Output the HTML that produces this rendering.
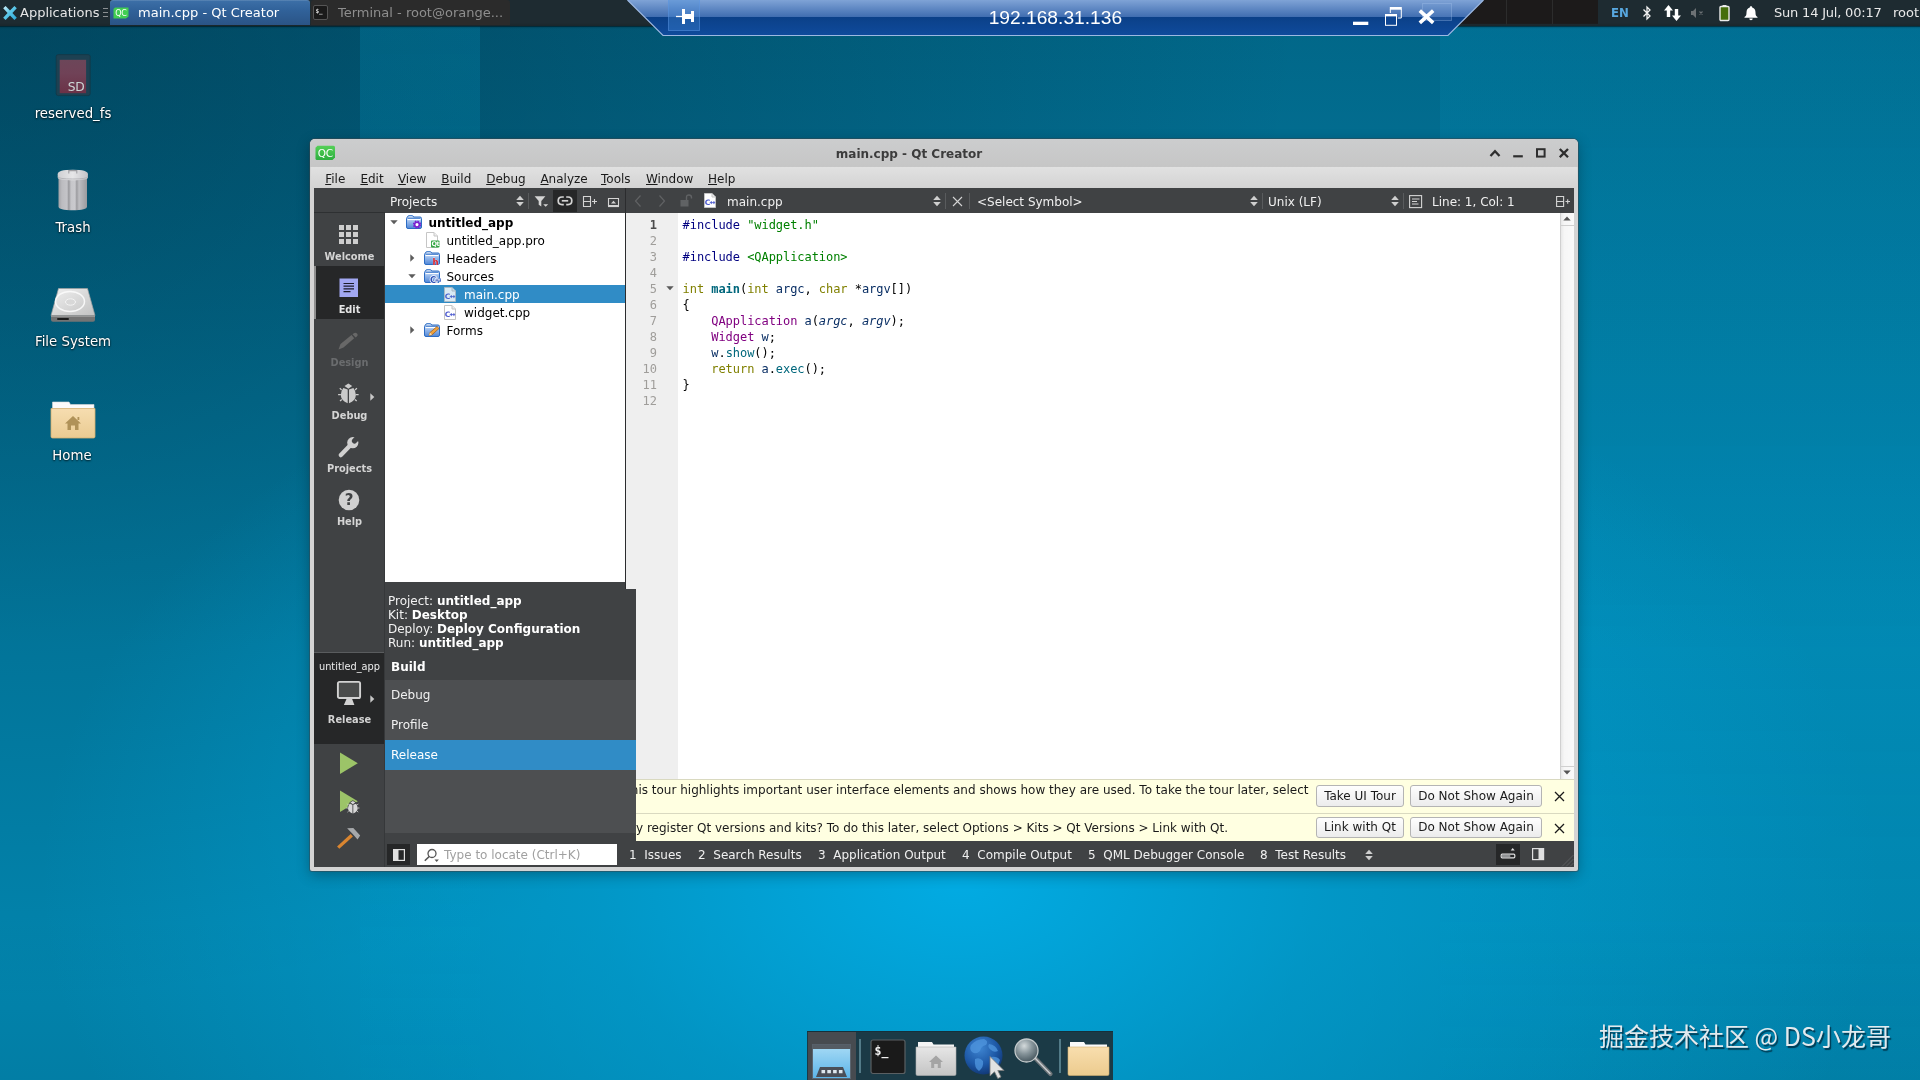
<!DOCTYPE html>
<html lang="en">
<head>
<meta charset="utf-8">
<title>main.cpp - Qt Creator</title>
<style>
*{box-sizing:border-box;margin:0;padding:0}
html,body{width:1920px;height:1080px;overflow:hidden}
body{position:relative;font-family:"DejaVu Sans","Liberation Sans",sans-serif;font-size:12px;color:#000;
background:
 radial-gradient(ellipse 920px 600px at 960px 880px, rgba(2,174,231,.92) 0%, rgba(2,165,218,.55) 40%, rgba(2,150,200,0) 100%),
 radial-gradient(ellipse 1300px 1000px at 0px 0px, rgba(0,25,38,.42) 0%, rgba(0,25,38,.26) 40%, rgba(0,25,38,0) 100%),
 linear-gradient(180deg, rgba(0,30,45,.30) 0%, rgba(0,30,45,0) 60%),
 linear-gradient(0deg, rgba(0,30,45,.07) 0%, rgba(0,30,45,0) 15%),
 #0285ae;
}
.abs{position:absolute}
body>*{will-change:transform}
.stripe{position:absolute;top:0;height:1080px}
/* ---------- top panel ---------- */
#panel{position:absolute;left:0;top:0;width:1920px;height:26px;background:#1e2b31;box-shadow:0 1px 0 rgba(0,20,28,.55),0 2px 1px rgba(0,20,28,.15);color:#e6e6e6;font-size:13px}
#panel .t{position:absolute;top:0;line-height:25px;white-space:pre}
/* ---------- desktop icons ---------- */
.dlabel{position:absolute;width:144px;left:0;text-align:center;color:#fff;font-size:13.3px;line-height:16px;text-shadow:0 1px 2px rgba(0,0,0,.75),0 0 2px rgba(0,0,0,.5)}
/* ---------- window ---------- */
#win{position:absolute;left:310px;top:139px;width:1268px;height:732px;background:#d4d4d4;border-radius:5px 5px 2px 2px;box-shadow:0 0 0 1px rgba(60,70,75,.5),0 4px 14px rgba(0,0,0,.3)}
#title{position:absolute;left:0;top:0;width:1268px;height:28px;border-radius:5px 5px 0 0;background:linear-gradient(#cccdce,#c6c6c6)}
#title .tt{position:absolute;left:-1px;width:1200px;text-align:center;top:.5px;line-height:28px;font-weight:bold;font-size:12px;color:#3c3c3c}
#menubar{position:absolute;left:1px;top:28px;width:1266px;height:21px;background:linear-gradient(#e1e1e1,#d3d3d3)}
#menubar span{position:absolute;top:1px;line-height:22px;font-size:12px;color:#1a1a1a;white-space:pre}
#menubar u{text-decoration:underline;text-underline-offset:1px}
#qc{position:absolute;left:4px;top:49px;width:1260px;height:679px;background:#fff;overflow:hidden}

/* ---------- Qt Creator ---------- */
#scr{position:absolute;left:-314px;top:-188px;width:1920px;height:1080px}
#scr div,#scr span,#scr svg{position:absolute}
.dk{background:#404244}
.tb{color:#f0f0f0;font-size:12px;line-height:24px;top:190px;white-space:pre}
.sep{top:193px;width:1px;height:16px;background:#595b5d}
.ml{left:314px;width:71px;text-align:center;font-weight:bold;font-size:9.800px;line-height:12px;margin-top:1px;color:#d4d4d4}
.tr{left:385px;width:240px;height:18px;font-size:12px;line-height:18px;white-space:pre}
.tr span{top:1px}
.ln{left:626px;width:31px;text-align:right;font:12px/16px "DejaVu Sans Mono","Liberation Mono",monospace;color:#9f9d9a;height:16px}
.cl{left:682.600px;height:16px;font:12px/16px "DejaVu Sans Mono","Liberation Mono",monospace;letter-spacing:-.055px;white-space:pre;color:#000}
.cl i,.cl b,.cl s,.cl u,.cl em,.cl q,.cl var{font-style:normal;font-weight:normal;text-decoration:none;quotes:none}
.cl i{color:#000080}.cl s{color:#008000}.cl u{color:#808000}.cl b{color:#00677c;font-weight:bold}.cl em{color:#800080}.cl var{color:#092e64}.cl var.it{font-style:italic}.cl q{color:#00677c}
.kl{left:388px;font-size:12px;line-height:14px;color:#f2f2f2;white-space:pre}
.kl b{color:#fff}
.li{left:385px;width:251px;height:30px;font-size:12px;line-height:31px;color:#f0f0f0;padding-left:6px}
.ib{left:626px;width:948px;background:#ffffe1;overflow:hidden;font-size:12px;color:#1a1a1a}
.ib .tx{white-space:pre;text-align:right;line-height:16px}
.btn{height:22px;border:1px solid #b4b4b4;border-radius:3px;background:linear-gradient(#fefefe,#ececec);font-size:12px;line-height:20px;text-align:center;color:#1a1a1a;white-space:pre}
.sb{top:843px;line-height:25px;font-size:12px;color:#f0f0f0;white-space:pre}
</style>
</head>
<body>
<!-- wallpaper stripes -->
<div class="stripe" style="left:360px;width:120px;background:linear-gradient(rgba(2,170,220,.20),rgba(2,170,220,.14) 50%,rgba(2,170,220,.05))"></div>
<div class="stripe" style="left:1440px;width:480px;background:linear-gradient(rgba(2,170,225,.13),rgba(2,170,225,.12) 55%,rgba(2,170,225,.03))"></div>

<!-- PANEL -->
<div id="panel">
 <div class="abs" style="left:1440px;top:0;width:158px;height:24px;background:#1c1a1a"></div>
 <div class="abs" style="left:1506px;top:0;width:1px;height:26px;background:#2c2c2c"></div>
 <div class="abs" style="left:1552px;top:0;width:1px;height:24px;background:#2c2c2c"></div>
 <div class="abs" style="left:0;top:23px;width:1920px;height:3px;background:linear-gradient(rgba(30,43,49,0),#1a262b)"></div>
 <!-- xfce logo -->
 <svg class="abs" style="left:2px;top:5px" width="16" height="16" viewBox="0 0 16 16"><defs><linearGradient id="xg" x1="0" y1="0" x2="1" y2="1"><stop offset="0" stop-color="#d8f2fb"/><stop offset=".45" stop-color="#5cc8ea"/><stop offset="1" stop-color="#2aa6d6"/></linearGradient></defs><path d="M1.2 3.2 3.6 .9 8 5.4 12.4 .9 14.8 3.2 10.4 7.9 14.8 12.7 12.4 15 8 10.4 3.6 15 1.2 12.7 5.6 7.9Z" fill="url(#xg)"/></svg>
 <span class="t" style="left:20px">Applications</span>
 <div class="abs" style="left:103px;top:8px;width:5px;height:1px;background:#8a8f92;box-shadow:0 4px 0 #8a8f92,0 8px 0 #8a8f92"></div>
 <!-- active task -->
 <div class="abs" style="left:110px;top:0;width:200px;height:25px;border-radius:3px 3px 0 0;background:linear-gradient(#3d70a8,#31629a 40%,#2a5486);box-shadow:inset 0 1px 0 rgba(255,255,255,.12)"></div>
 <svg class="abs" style="left:113px;top:7px" width="16" height="12" viewBox="0 0 16 12"><path d="M2 .5h13.5v9L13 11.5H.5V2Z" fill="#41cd52"/><text x="8" y="9.200" font-family="DejaVu Sans,sans-serif" font-size="8" fill="#fff" text-anchor="middle" letter-spacing="-.3">QC</text></svg>
 <span class="t" style="left:138px;color:#fff">main.cpp - Qt Creator</span>
 <!-- terminal task -->
 <div class="abs" style="left:311px;top:0;width:199px;height:25px;border-radius:3px 3px 0 0;background:#2b2b2b"></div>
 <svg class="abs" style="left:313px;top:5px" width="16" height="16" viewBox="0 0 16 16"><rect x=".5" y=".5" width="14" height="14" rx="1.5" fill="#1a1a1a" stroke="#555"/><text x="2.5" y="8" font-family="DejaVu Sans Mono,monospace" font-weight="bold" font-size="6" fill="#ddd">$_</text></svg>
 <span class="t" style="left:338px;color:#8e8e8e">Terminal - root@orange...</span>
 <!-- tray -->
 <span class="t" style="left:1611px;color:#58a8e0;font-weight:bold;font-size:13px;font-family:'DejaVu Sans Condensed','DejaVu Sans',sans-serif">EN</span>
 <svg class="abs" style="left:1641px;top:5px" width="12" height="16" viewBox="0 0 12 16"><path d="M2.5 4.5 9 11 6 14V2l3 3-6.5 6.5" fill="none" stroke="#f2f2f2" stroke-width="1.3"/></svg>
 <svg class="abs" style="left:1663px;top:4px" width="20" height="18" viewBox="0 0 20 18"><path d="M5.500 1 10 6.500H7.200V13H3.800V6.500H1Z" fill="#fff"/><path d="M13.500 17 18 11.500H15.200V5H11.800V11.500H9Z" fill="#fff"/></svg>
 <svg class="abs" style="left:1690px;top:7px" width="16" height="12" viewBox="0 0 16 12"><path d="M1 4h2l3-3v10L3 8H1Z" fill="#6c7174"/><path d="M9.500 4.500l3 3m0-3l-3 3" stroke="#6c7174" stroke-width="1.1"/></svg>
 <svg class="abs" style="left:1718px;top:4px" width="14" height="18" viewBox="0 0 14 18"><rect x="4.500" y="1" width="4" height="2" fill="#e8e8e8"/><rect x="2" y="2.500" width="9" height="14" rx="1" fill="#456e0c" stroke="#ececec" stroke-width="1.4"/></svg>
 <svg class="abs" style="left:1743px;top:5px" width="16" height="16" viewBox="0 0 16 16"><path d="M8 1.200c.8 0 1.200.5 1.200 1.200 2.300.7 3.300 2.600 3.300 5 0 2.600.5 3.600 2 4.600v.8H1.500V12c1.500-1 2-2 2-4.600 0-2.400 1-4.300 3.300-5 0-.7.400-1.200 1.200-1.200ZM6.300 13.600h3.400c0 1-.7 1.700-1.700 1.700s-1.700-.7-1.700-1.700Z" fill="#fff"/></svg>
 <span class="t" style="left:1774px;color:#e9e9e9;letter-spacing:-.2px">Sun 14 Jul, 00:17</span>
 <span class="t" style="left:1893px;color:#e9e9e9">root</span>
</div>

<!-- RDP connection bar -->
<svg class="abs" style="left:620px;top:0" width="880" height="40" viewBox="0 0 880 40">
 <defs>
  <linearGradient id="rg1" x1="0" y1="0" x2="0" y2="1"><stop offset="0" stop-color="#7fa3d6"/><stop offset=".47" stop-color="#416eb1"/><stop offset=".48" stop-color="#0b4088"/><stop offset="1" stop-color="#0f4b9c"/></linearGradient>
 </defs>
 <path d="M7.500 0H863.500L828 35.500H43Z" fill="url(#rg1)"/>
 <path d="M7.500 0 43 35.500H828L863.500 0" fill="none" stroke="#9db9e2" stroke-width="1.200"/>
 <rect x="48.500" y="-1" width="31" height="31.500" fill="rgba(70,140,220,.35)" stroke="rgba(90,150,225,.55)"/>
 <path d="M56 16.500h6" stroke="#fff" stroke-width="1.300"/><path d="M62 9h3v15h-3zM65 14h6v5h-6zM71 11h3v11h-3z" fill="#fff"/>
 <text x="368.700" y="23.900" font-family="Liberation Sans,sans-serif" font-size="19.200" fill="#fff">192.168.31.136</text>
 <rect x="733" y="21.700" width="15.300" height="3.300" fill="#fff"/>
 <path d="M770.300 13v-4h11v9h-3.500" fill="none" stroke="#fff" stroke-width="1"/><path d="M769.800 8.200h12" stroke="#fff" stroke-width="2.400"/>
 <rect x="765.500" y="15" width="11" height="10.300" fill="#0d4592" stroke="#fff" stroke-width="1"/><path d="M765 15.200h12" stroke="#fff" stroke-width="2.400"/>
 <rect x="802.500" y="3.500" width="29" height="17" fill="rgba(120,160,220,.16)" stroke="rgba(170,200,240,.32)"/>
 <path d="M799.800 10.600 813.200 22.800M813.200 10.600 799.800 22.800" stroke="#fff" stroke-width="3.600"/>
</svg>


<!-- DESKTOP ICONS -->
<div id="desk" class="abs" style="left:0;top:0;width:160px;height:480px">
 <svg class="abs" style="left:55px;top:53px" width="38" height="44" viewBox="0 0 38 44"><defs><linearGradient id="sdg" x1="0" y1="0" x2="0" y2="1"><stop offset="0" stop-color="#6c4659"/><stop offset=".4" stop-color="#704257"/><stop offset="1" stop-color="#6b3247"/></linearGradient></defs><rect x="1.200" y="1.600" width="34" height="41" rx="2" fill="#1d4152"/><rect x="1.200" y="1.600" width="34" height="41" rx="2" fill="none" stroke="#16323f" stroke-width=".8" opacity=".7"/><rect x="4.700" y="6.800" width="26.400" height="33.400" fill="url(#sdg)"/><text x="29.300" y="38.200" text-anchor="end" font-family="DejaVu Sans,sans-serif" font-size="12.300" fill="#cdd6d6" letter-spacing="-.4">SD</text></svg>
 <div class="dlabel" style="left:1px;top:106px">reserved_fs</div>

 <svg class="abs" style="left:56px;top:168px" width="34" height="44" viewBox="0 0 34 44"><defs><linearGradient id="tg" x1="0" y1="0" x2="1" y2="0"><stop offset="0" stop-color="#a2a2a6"/><stop offset=".12" stop-color="#bcbcc0"/><stop offset=".3" stop-color="#c4c4c8"/><stop offset=".36" stop-color="#98989c"/><stop offset=".44" stop-color="#c6c6ca"/><stop offset=".58" stop-color="#cacace"/><stop offset=".64" stop-color="#9c9ca0"/><stop offset=".72" stop-color="#bebec2"/><stop offset="1" stop-color="#9a9a9e"/></linearGradient><linearGradient id="tl" x1="0" y1="0" x2="1" y2="0"><stop offset="0" stop-color="#cfcfd2"/><stop offset=".5" stop-color="#e6e6e8"/><stop offset="1" stop-color="#c4c4c8"/></linearGradient></defs><path d="M2.500 9V38.500Q2.500 42.300 16.800 42.300Q31 42.300 31 38.500V9Z" fill="url(#tg)"/><path d="M1.700 6.200Q1.700 1.800 16.800 1.800Q31.900 1.800 31.900 6.200V9.500Q31.900 12.200 16.800 12.200Q1.700 12.200 1.700 9.500Z" fill="url(#tl)"/><path d="M1.900 8.800Q2.500 11 16.800 11Q31 11 31.700 8.800" fill="none" stroke="#a8a8ac" stroke-width=".7"/><path d="M12.800 5.400V2.600H20.800V5.400" fill="none" stroke="#a0a0a4" stroke-width="1.100"/></svg>
 <div class="dlabel" style="left:1px;top:220px">Trash</div>

 <svg class="abs" style="left:49px;top:287px" width="48" height="37" viewBox="0 0 48 37"><defs><linearGradient id="hg" x1="0" y1="0" x2="1" y2="1"><stop offset="0" stop-color="#f0f0f0"/><stop offset="1" stop-color="#c2c2c2"/></linearGradient></defs><path d="M9.500 1.500H38.500L46 28.500H2Z" fill="url(#hg)" stroke="#a0a0a0" stroke-width=".7"/><ellipse cx="21" cy="14.500" rx="14.500" ry="10" fill="none" stroke="#fbfbfb" stroke-width="1.500" opacity=".9"/><ellipse cx="21.500" cy="15" rx="5" ry="3.200" fill="#d8d8d8" stroke="#f4f4f4"/><path d="M2 28.500H46V32.800Q46 34.800 44 34.800H4Q2 34.800 2 32.800Z" fill="#747474"/><path d="M2 28.500H46V29.800H2Z" fill="#a2a2a2"/><rect x="8" y="31" width="12" height="2" rx="1" fill="#1c1c1c"/></svg>
 <div class="dlabel" style="left:1px;top:334px">File System</div>

 <svg class="abs" style="left:49px;top:400px" width="48" height="40" viewBox="0 0 48 40"><defs><linearGradient id="hf" x1="0" y1="0" x2="0" y2="1"><stop offset="0" stop-color="#f6ddb0"/><stop offset="1" stop-color="#eacb92"/></linearGradient></defs><path d="M3.500 2H20L21.500 4.500H45V12H3.500Z" fill="#fbfbfb" stroke="#d8d8d8" stroke-width=".6"/><path d="M2 8.500H46V36.500Q46 38 44.500 38H3.500Q2 38 2 36.500Z" fill="url(#hf)" stroke="#d4b070" stroke-width=".8"/><path d="M24 16 32 23.500H29.500V30H26V25.500H22V30H18.500V23.500H16Z" fill="#b09258"/><rect x="28.500" y="17" width="1.800" height="3" fill="#b09258"/></svg>
 <div class="dlabel" style="left:0;top:448px">Home</div>
</div>

<!-- DOCK -->
<div id="dock" class="abs" style="left:807px;top:1031px;width:306px;height:49px;background:#1b3a46;box-shadow:inset 0 1px 0 #16303a">
 <div class="abs" style="left:1px;top:1px;width:48px;height:48px;background:#474b50"></div>
 <svg class="abs" style="left:5px;top:13px" width="40" height="36" viewBox="0 0 40 36"><defs><linearGradient id="dg" x1="0" y1="0" x2="0" y2="1"><stop offset="0" stop-color="#a9dcf6"/><stop offset="1" stop-color="#5cb4e8"/></linearGradient></defs><rect x=".5" y=".5" width="38" height="34" fill="url(#dg)" stroke="#5a6570"/><rect x=".5" y=".5" width="38" height="4.500" fill="#555c64"/><path d="M8 23H31L35 33H4Z" fill="#4a4f58"/><path d="M9.500 26h3.600v3.200H9.500zM15.300 26h3.600v3.200h-3.600zM21.100 26h3.600v3.200h-3.600zM26.900 26h3.600v3.200h-3.600z" fill="#dfe8ee"/></svg>
 <div class="abs" style="left:52px;top:8px;width:2px;height:34px;background:#5d8794;opacity:.85"></div>
 <svg class="abs" style="left:63px;top:8px" width="36" height="36" viewBox="0 0 36 36"><rect x="1" y="1" width="34" height="33.500" rx="2" fill="#1a1a1a" stroke="#5a5f62" stroke-width="1.200"/><text x="4.500" y="16" font-family="DejaVu Sans Mono,monospace" font-weight="bold" font-size="11.500" fill="#f2f2f2">$_</text></svg>
 <svg class="abs" style="left:108px;top:10px" width="42" height="36" viewBox="0 0 42 36"><defs><linearGradient id="gf" x1="0" y1="0" x2="0" y2="1"><stop offset="0" stop-color="#e6e6e6"/><stop offset="1" stop-color="#c4c4c4"/></linearGradient></defs><path d="M3 1H17L18.500 3.500H39V10H3Z" fill="#f4f4f4"/><path d="M1 6H41V33Q41 34.500 39.500 34.500H2.500Q1 34.500 1 33Z" fill="url(#gf)" stroke="#b0b0b0" stroke-width=".6"/><path d="M21 14.500 28 21H25.800V27H22.800V23H19.200V27H16.200V21H14Z" fill="#a4a4a4"/></svg>
 <svg class="abs" style="left:156px;top:4px" width="46" height="44" viewBox="0 0 46 44"><defs><radialGradient id="gl" cx=".4" cy=".3" r=".75"><stop offset="0" stop-color="#3f86d2"/><stop offset=".6" stop-color="#1d58a6"/><stop offset="1" stop-color="#103470"/></radialGradient></defs><circle cx="20.500" cy="20.500" r="19" fill="url(#gl)"/><path d="M8 10Q13 4 21 4Q26 6 23 10Q18 11 17 16Q13 20 9 17Q6 14 8 10ZM26 9Q33 10 35 16Q31 18 28 15Q24 12 26 9ZM12 24Q17 22 20 26Q21 32 16 36Q11 33 12 24ZM28 22Q34 21 37 25Q35 32 30 35Q26 30 28 22Z" fill="#4d94dc" opacity=".8"/><path d="M27 21.500V41L31.500 36.800 34.800 43.500 38 42 34.800 35.500H41Z" fill="#e2e2e2" stroke="#7a7a7a" stroke-width=".8"/></svg>
 <svg class="abs" style="left:206px;top:6px" width="42" height="42" viewBox="0 0 42 42"><defs><radialGradient id="mg" cx=".4" cy=".3" r=".7"><stop offset="0" stop-color="#d4dadc"/><stop offset=".5" stop-color="#86949a"/><stop offset="1" stop-color="#4a5a62"/></radialGradient></defs><path d="M22 21 37.500 37" stroke="#6e7478" stroke-width="4.200" stroke-linecap="round"/><path d="M22 21 37 36.500" stroke="#c8cccf" stroke-width="1.400" stroke-linecap="round"/><circle cx="13.500" cy="13.500" r="11.500" fill="url(#mg)" stroke="#c4cacc" stroke-width="1.300"/></svg>
 <div class="abs" style="left:252px;top:8px;width:2px;height:34px;background:#5d8794;opacity:.85"></div>
 <svg class="abs" style="left:260px;top:10px" width="44" height="36" viewBox="0 0 44 36"><defs><linearGradient id="yf" x1="0" y1="0" x2="0" y2="1"><stop offset="0" stop-color="#f8deae"/><stop offset="1" stop-color="#eccb8e"/></linearGradient></defs><path d="M3 1H17L18.500 3.500H40V10H3Z" fill="#fafafa"/><path d="M1 6H42V33Q42 34.500 40.500 34.500H2.500Q1 34.500 1 33Z" fill="url(#yf)" stroke="#d4b070" stroke-width=".6"/></svg>
</div>

<!-- WATERMARK -->
<div class="abs" style="left:1599px;top:1017px;font-family:'Noto Sans CJK SC','Liberation Sans',sans-serif;font-size:25px;line-height:37px;color:#e2eaee;white-space:pre;text-shadow:1.500px 1.500px 1px rgba(0,40,60,.8)">掘金技术社区 @ DS小龙哥</div>

<!-- WINDOW -->
<div id="win">
 <div id="title"><div class="tt">main.cpp - Qt Creator</div>
 <svg class="abs" style="left:5px;top:6px" width="21" height="16" viewBox="0 0 21 16"><defs><linearGradient id="qg" x1="0" y1="0" x2="0" y2="1"><stop offset="0" stop-color="#55d058"/><stop offset="1" stop-color="#2cae3e"/></linearGradient></defs><path d="M2.500 .8H18.500Q20 .8 20 2.300V12.500L17.500 15H2Q.5 15 .5 13.500V2.800Z" fill="url(#qg)"/><text x="10.200" y="12" text-anchor="middle" font-family="DejaVu Sans,sans-serif" font-size="10.500" fill="#fff" letter-spacing="-.3">QC</text></svg>
 <svg class="abs" style="left:1179px;top:9px" width="12" height="10" viewBox="0 0 12 10"><path d="M1.500 8 6 3.200 10.500 8" fill="none" stroke="#2e2e2e" stroke-width="2.300"/></svg>
 <svg class="abs" style="left:1202px;top:9px" width="12" height="10" viewBox="0 0 12 10"><path d="M1.200 8.300H10.800" stroke="#2e2e2e" stroke-width="2.200"/></svg>
 <svg class="abs" style="left:1225px;top:9px" width="12" height="10" viewBox="0 0 12 10"><rect x="2" y="1.200" width="7.600" height="7.400" fill="none" stroke="#2e2e2e" stroke-width="2"/></svg>
 <svg class="abs" style="left:1248px;top:9px" width="12" height="10" viewBox="0 0 12 10"><path d="M1.800 1 10 9.200M10 1 1.800 9.200" stroke="#2e2e2e" stroke-width="2.300"/></svg>
</div>
 <div id="menubar"><span style="left:14.2px"><u>F</u>ile</span><span style="left:49.4px"><u>E</u>dit</span><span style="left:86.9px"><u>V</u>iew</span><span style="left:130.2px"><u>B</u>uild</span><span style="left:175.2px"><u>D</u>ebug</span><span style="left:229.4px"><u>A</u>nalyze</span><span style="left:290.0px"><u>T</u>ools</span><span style="left:335.0px"><u>W</u>indow</span><span style="left:397.0px"><u>H</u>elp</span></div>
 <div id="qc"><div id="scr">
<svg style="left:0;top:0" width="0" height="0"><defs>
<linearGradient id="fg" x1="0" y1="0" x2="0" y2="1"><stop offset="0" stop-color="#e8f0fc"/><stop offset=".35" stop-color="#a9c6f0"/><stop offset="1" stop-color="#4f86d6"/></linearGradient>
<g id="fold"><path d="M1.500 2.200Q1.500 .7 3 .7H6.200Q7.300 .7 7.600 2H14Q15.500 2 15.500 3.500V12Q15.500 13.500 14 13.500H2Q.5 13.500 .5 12V3.500Q.5 2.300 1.500 2.200Z" fill="url(#fg)" stroke="#2c6cc4" stroke-width="1"/><path d="M1.500 4.500H14.500" stroke="#fff" stroke-width="1.200"/><path d="M1.500 3.200H14.500" stroke="#2c6cc4" stroke-width="1"/></g>
<g id="cppf"><path d="M1.500 .5H9L12.500 4V14.500H1.500Z" fill="#fff" stroke="#c4c4c4"/><path d="M9 .5V4H12.500" fill="#eee" stroke="#c4c4c4"/><text x="1.800" y="12.300" font-family="DejaVu Sans,sans-serif" font-weight="bold" font-size="7.500" fill="#4d5bd0">C</text><path d="M6.800 9.600h3M8.300 8.100v3M9.600 9.600h2.600M10.900 8.100v3" stroke="#4d5bd0" stroke-width=".9"/></g>
</defs></svg>
<!-- toolbar -->
<div class="dk" style="left:314px;top:188px;width:1260px;height:25px"></div>
<div style="left:314px;top:212px;width:71px;height:1px;background:#2e3032"></div>
<div style="left:553px;top:190px;width:24px;height:22px;background:#262728"></div>
<div style="left:625px;top:188px;width:1px;height:679px;background:#2b2c2e"></div>
<span class="tb" style="left:390px">Projects</span>
<svg style="left:515.5px;top:195px" width="8" height="12" viewBox="0 0 8 12"><path d="M.2 5 4 .8 7.800 5ZM.2 7 4 11.200 7.800 7Z" fill="#cfcfcf"/></svg>
<div class="sep" style="left:528px"></div>
<svg style="left:534px;top:195px" width="16" height="13" viewBox="0 0 16 13"><path d="M.6 1.200H11.400L7.300 6V11.600L4.700 9.800V6Z" fill="#d4d4d4"/><path d="M9.200 9.200H14.200L11.700 11.800Z" fill="#d4d4d4"/></svg>
<svg style="left:557px;top:195px" width="16" height="12" viewBox="0 0 16 12"><path d="M6.800 2H5Q1.200 2 1.200 5.800Q1.200 9.600 5 9.600H6.800M9.200 2H11Q14.800 2 14.800 5.800Q14.800 9.600 11 9.600H9.200" fill="none" stroke="#d4d4d4" stroke-width="1.700"/><path d="M4.800 5.800H11.200" stroke="#d4d4d4" stroke-width="1.700"/></svg>
<svg style="left:582px;top:195px" width="16" height="13" viewBox="0 0 16 13"><path d="M1.500 1.500H8.500V11.500H1.500ZM1.500 6.500H8.500" fill="none" stroke="#d4d4d4" stroke-width="1.100"/><path d="M10 6.500H15M12.500 4V9" stroke="#d4d4d4" stroke-width="1.100"/></svg>
<svg style="left:607px;top:197px" width="13" height="11" viewBox="0 0 13 11"><path d="M1.500 1.500H11.500V8.500H1.500Z" fill="none" stroke="#d4d4d4" stroke-width="1.100"/><path d="M1 9.300H12" stroke="#d4d4d4" stroke-width="1.600"/><path d="M4 6.500 6.500 3.700 9 6.500Z" fill="#d4d4d4"/></svg>
<svg style="left:633px;top:194px" width="10" height="14" viewBox="0 0 10 14"><path d="M7.500 1.500 2.500 7 7.500 12.500" fill="none" stroke="#606264" stroke-width="1.200"/></svg>
<svg style="left:657px;top:194px" width="10" height="14" viewBox="0 0 10 14"><path d="M2.500 1.500 7.500 7 2.500 12.500" fill="none" stroke="#606264" stroke-width="1.200"/></svg>
<svg style="left:679px;top:193px" width="14" height="15" viewBox="0 0 14 15"><rect x="1.500" y="7" width="8" height="6.500" fill="#606264"/><path d="M7.500 7V4.500Q7.500 2 10 2Q12.500 2 12.500 4.500V5.500" fill="none" stroke="#606264" stroke-width="1.400"/></svg>
<svg style="left:703px;top:193px" width="14" height="16" viewBox="0 0 14 16"><use href="#cppf"/></svg>
<span class="tb" style="left:727px">main.cpp</span>
<svg style="left:932.5px;top:195px" width="8" height="12" viewBox="0 0 8 12"><path d="M.2 5 4 .8 7.800 5ZM.2 7 4 11.200 7.800 7Z" fill="#cfcfcf"/></svg>
<div class="sep" style="left:945px"></div>
<svg style="left:952.300px;top:196px" width="11" height="11" viewBox="0 0 11 11"><path d="M1 1 10 10M10 1 1 10" stroke="#d4d4d4" stroke-width="1.100"/></svg>
<div class="sep" style="left:969px"></div>
<span class="tb" style="left:977px">&lt;Select Symbol&gt;</span>
<svg style="left:1249.5px;top:195px" width="8" height="12" viewBox="0 0 8 12"><path d="M.2 5 4 .8 7.800 5ZM.2 7 4 11.200 7.800 7Z" fill="#cfcfcf"/></svg>
<div class="sep" style="left:1262px"></div>
<span class="tb" style="left:1268px">Unix (LF)</span>
<svg style="left:1390.5px;top:195px" width="8" height="12" viewBox="0 0 8 12"><path d="M.2 5 4 .8 7.800 5ZM.2 7 4 11.200 7.800 7Z" fill="#cfcfcf"/></svg>
<div class="sep" style="left:1403px"></div>
<svg style="left:1409px;top:195px" width="14" height="14" viewBox="0 0 14 14"><rect x=".6" y=".6" width="12" height="12" fill="none" stroke="#d4d4d4" stroke-width="1.100"/><path d="M3 4H10.500M3 6.500H8M3 9H9.500" stroke="#d4d4d4" stroke-width="1.100"/></svg>
<span class="tb" style="left:1432px">Line: 1, Col: 1</span>
<svg style="left:1556px;top:195px" width="15" height="13" viewBox="0 0 15 13"><path d="M.6 1.500H7.600V11.500H.6ZM.6 6.500H7.600" fill="none" stroke="#d4d4d4" stroke-width="1.100"/><path d="M9.500 6.500H14M11.700 4.200V8.800" stroke="#d4d4d4" stroke-width="1.100"/></svg>

<!-- project tree -->
<div style="left:385px;top:213px;width:240px;height:369px;background:#fff"></div>
<div style="left:385px;top:285px;width:240px;height:18px;background:#308cc6"></div>
<svg style="left:390px;top:220px" width="8" height="5" viewBox="0 0 8 5"><path d="M.3 .3H7.700L4 4.300Z" fill="#5c5c5c"/></svg><svg style="left:406px;top:215px" width="17" height="15" viewBox="0 0 17 15"><use href="#fold"/><g transform="translate(11 9.600)"><circle r="3.100" fill="none" stroke="#7a1fd0" stroke-width="2" stroke-dasharray="1.400 1.040"/><circle r="2.300" fill="#fff" stroke="#7a1fd0" stroke-width="1.500"/></g></svg>
<div class="tr" style="top:213px"><span style="left:43.500px;font-weight:bold">untitled_app</span></div>
<svg style="left:425px;top:232px" width="15" height="16" viewBox="0 0 15 16"><path d="M1.500 .5H9L12.500 4V15.500H1.500Z" fill="#fff" stroke="#c6c6c6"/><path d="M9 .5V4H12.500" fill="#eee" stroke="#c6c6c6"/><rect x="6" y="8.500" width="8.500" height="7" rx="1" fill="#2fa540"/><text x="6.600" y="14.300" font-family="DejaVu Sans,sans-serif" font-weight="bold" font-size="6.500" fill="#fff" letter-spacing="-.5">Qt</text></svg>
<div class="tr" style="top:231px"><span style="left:61.500px">untitled_app.pro</span></div>
<svg style="left:410px;top:254px" width="5" height="8" viewBox="0 0 5 8"><path d="M.3 .3V7.700L4.300 4Z" fill="#5c5c5c"/></svg><svg style="left:424px;top:251px" width="17" height="15" viewBox="0 0 17 15"><use href="#fold"/><text x="8.500" y="13.500" font-family="DejaVu Sans,sans-serif" font-weight="bold" font-size="8.500" fill="#d81e28" stroke="#fff" stroke-width=".5" paint-order="stroke">h</text></svg>
<div class="tr" style="top:249px"><span style="left:61.500px">Headers</span></div>
<svg style="left:408px;top:274px" width="8" height="5" viewBox="0 0 8 5"><path d="M.3 .3H7.700L4 4.300Z" fill="#5c5c5c"/></svg><svg style="left:424px;top:269px" width="17" height="15" viewBox="0 0 17 15"><use href="#fold"/><text x="6" y="13.800" font-family="DejaVu Sans,sans-serif" font-weight="bold" font-size="8.500" fill="#2b50b8" stroke="#fff" stroke-width="1.400" paint-order="stroke" letter-spacing="-.9">C</text><text x="10.500" y="13.300" font-family="DejaVu Sans,sans-serif" font-weight="bold" font-size="6" fill="#2b50b8" stroke="#fff" stroke-width="1.200" paint-order="stroke" letter-spacing="-1.400">++</text></svg>
<div class="tr" style="top:267px"><span style="left:61.500px">Sources</span></div>
<svg style="left:442.600px;top:286.600px;opacity:.82" width="14" height="16" viewBox="0 0 14 16"><use href="#cppf"/></svg>
<div class="tr" style="top:285px;color:#fff"><span style="left:79px">main.cpp</span></div>
<svg style="left:442.600px;top:304.600px" width="14" height="16" viewBox="0 0 14 16"><use href="#cppf"/></svg>
<div class="tr" style="top:303px"><span style="left:79px">widget.cpp</span></div>
<svg style="left:410px;top:326px" width="5" height="8" viewBox="0 0 5 8"><path d="M.3 .3V7.700L4.300 4Z" fill="#5c5c5c"/></svg><svg style="left:424px;top:323px" width="17" height="15" viewBox="0 0 17 15"><use href="#fold"/><path d="M5 12.500 6 9.500 13 3.500 15 5.500 8 11.800Z" fill="#f0a23c" stroke="#a05a10" stroke-width=".7"/><path d="M5 12.500 6 9.500 8 11.800Z" fill="#f6dcb0"/></svg>
<div class="tr" style="top:321px"><span style="left:61.500px">Forms</span></div>

<!-- editor -->
<div style="left:626px;top:213px;width:948px;height:567px;background:#fff"></div>
<div style="left:626px;top:213px;width:52px;height:567px;background:#efefef"></div>
<div class="ln" style="top:217px;color:#4b4b4b;font-weight:bold">1</div><div class="cl" style="top:217px"><i>#include</i> <s>"widget.h"</s></div>
<div class="ln" style="top:233px">2</div>
<div class="ln" style="top:249px">3</div><div class="cl" style="top:249px"><i>#include</i> <s>&lt;QApplication&gt;</s></div>
<div class="ln" style="top:265px">4</div>
<div class="ln" style="top:281px">5</div><div class="cl" style="top:281px"><u>int</u> <b>main</b>(<u>int</u> <var>argc</var>, <u>char</u> *<var>argv</var>[])</div>
<div class="ln" style="top:297px">6</div><div class="cl" style="top:297px">{</div>
<div class="ln" style="top:313px">7</div><div class="cl" style="top:313px">    <em>QApplication</em> <var>a</var>(<var class="it">argc</var>, <var class="it">argv</var>);</div>
<div class="ln" style="top:329px">8</div><div class="cl" style="top:329px">    <em>Widget</em> <var>w</var>;</div>
<div class="ln" style="top:345px">9</div><div class="cl" style="top:345px">    <var>w</var>.<q>show</q>();</div>
<div class="ln" style="top:361px">10</div><div class="cl" style="top:361px">    <u>return</u> <var>a</var>.<q>exec</q>();</div>
<div class="ln" style="top:377px">11</div><div class="cl" style="top:377px">}</div>
<div class="ln" style="top:393px">12</div>
<svg style="left:666px;top:286px" width="8" height="5" viewBox="0 0 8 5"><path d="M.3 .3H7.700L4 4.300Z" fill="#5a5a5a"/></svg>
<!-- editor scrollbar -->
<div style="left:1560px;top:213px;width:14px;height:567px;background:linear-gradient(90deg,#e4e4e4,#f6f6f6 30%,#fafafa)"></div>
<div style="left:1560px;top:213px;width:1px;height:567px;background:#d0d0d0"></div>
<div style="left:1560px;top:225px;width:14px;height:1px;background:#d0d0d0"></div>
<div style="left:1560px;top:766px;width:14px;height:1px;background:#d0d0d0"></div>
<svg style="left:1563px;top:216px" width="8" height="5" viewBox="0 0 8 5"><path d="M.3 4.500H7.700L4 .5Z" fill="#555"/></svg>
<svg style="left:1563px;top:770px" width="8" height="5" viewBox="0 0 8 5"><path d="M.3 .5H7.700L4 4.500Z" fill="#555"/></svg>


<!-- mode bar -->
<div class="dk" style="left:314px;top:213px;width:71px;height:654px"></div>
<div style="left:314px;top:266px;width:71px;height:53px;background:#262728"></div>
<div style="left:314px;top:266px;width:2px;height:53px;background:#8f8f8f"></div>
<div style="left:314px;top:653px;width:71px;height:91px;background:#262728"></div>
<div style="left:314px;top:652px;width:71px;height:1px;background:#5a5c5e"></div>
<div style="left:384px;top:213px;width:1px;height:654px;background:#36383a"></div>
<svg style="left:339px;top:225px" width="20" height="20" viewBox="0 0 20 20"><path d="M0 0h5v5H0zM7 0h5v5H7zM14 0h5v5h-5zM0 7h5v5H0zM7 7h5v5H7zM14 7h5v5h-5zM0 14h5v5H0zM7 14h5v5H7zM14 14h5v5h-5z" fill="#cdcdcd"/></svg>
<div class="ml" style="top:250px">Welcome</div>
<svg style="left:339px;top:278px" width="20" height="20" viewBox="0 0 20 20"><rect x=".5" y=".5" width="18.500" height="18.500" fill="#a2a8f2"/><path d="M4.500 5.500H15M4.500 8.200H15M4.500 10.900H15M4.500 13.600H11.500" stroke="#1c1c2a" stroke-width="1.200"/></svg>
<div class="ml" style="top:303px;color:#e6e6e6">Edit</div>
<svg style="left:336px;top:330px" width="24" height="22" viewBox="0 0 24 22"><path d="M2.500 19.500 4.500 14 15.500 5 18.200 8.200 7.500 17.500Z" fill="#686868"/><path d="M16.500 4.200Q19 1.500 21 3.500Q22.800 5.500 19.600 7.600Z" fill="#686868"/></svg>
<div class="ml" style="top:356px;color:#6a6c6e">Design</div>
<svg style="left:337px;top:382px" width="23" height="23" viewBox="0 0 23 23"><path d="M11.350 1.600 15.200 4.100 11.350 6.700 7.500 4.100Z" fill="#cbcbcb"/><path d="M10.700 7.600 6.300 6Q4.200 8.500 3.800 12.900Q4 18.400 10.700 21.300ZM12 7.600 16.400 6Q18.500 8.500 18.900 12.900Q18.700 18.400 12 21.300Z" fill="#cbcbcb"/><path d="M4.600 8 2.800 6.100M3.900 12.700H1.100M4.800 17.500 3 19.100M18.100 8 19.900 6.100M18.800 12.700H21.600M17.900 17.500 19.700 19.100" stroke="#cbcbcb" stroke-width="1.300"/></svg>
<svg style="left:370px;top:392.5px" width="5" height="8" viewBox="0 0 5 8"><path d="M.3 .3V7.700L4.300 4Z" fill="#c8c8c8"/></svg>
<div class="ml" style="top:409px">Debug</div>
<svg style="left:337px;top:436px" width="23" height="22" viewBox="0 0 23 22"><path d="M3.900 19.100 12.600 9.900" stroke="#d0d0d0" stroke-width="4.300" stroke-linecap="round"/><circle cx="15.800" cy="6.700" r="5.600" fill="#d0d0d0"/><path d="M17.500 4.900 23 -.6" stroke="#404244" stroke-width="5.200" stroke-linecap="round"/></svg>
<div class="ml" style="top:462px">Projects</div>
<svg style="left:338px;top:489px" width="22" height="22" viewBox="0 0 22 22"><circle cx="11" cy="11" r="10.300" fill="#d0d0d0"/><text x="11" y="16.300" text-anchor="middle" font-family="DejaVu Sans,sans-serif" font-weight="bold" font-size="15" fill="#404244">?</text></svg>
<div class="ml" style="top:515px">Help</div>
<div class="ml" style="top:660px;font-weight:normal;color:#ececec">untitled_app</div>
<svg style="left:336px;top:680px" width="26" height="26" viewBox="0 0 26 26"><rect x="1.900" y="1.900" width="22.200" height="16.100" rx="1.600" fill="#4a4c4c" stroke="#d2d2d2" stroke-width="1.900"/><path d="M7.900 24.900 10.600 18.800H16L18.400 24.900Z" fill="#d2d2d2"/></svg>
<svg style="left:370px;top:694.5px" width="5" height="8" viewBox="0 0 5 8"><path d="M.3 .3V7.700L4.300 4Z" fill="#c8c8c8"/></svg>
<div class="ml" style="top:713px">Release</div>
<svg style="left:339px;top:752px" width="20" height="23" viewBox="0 0 20 23"><path d="M1 .6V22L18.800 11.300Z" fill="#9cc468"/></svg>
<svg style="left:339px;top:790px" width="22" height="24" viewBox="0 0 22 24"><path d="M1 .6V22L18.800 11.300Z" fill="#9cc468"/><g transform="translate(6.600 9.900) scale(.64)" stroke="#404244" stroke-width="2" paint-order="stroke"><path d="M11.350 1.600 15.200 4.100 11.350 6.700 7.500 4.100Z" fill="#d8d8d8"/><path d="M10.700 7.600 6.300 6Q4.200 8.500 3.800 12.900Q4 18.400 10.700 21.300ZM12 7.600 16.400 6Q18.500 8.500 18.900 12.900Q18.700 18.400 12 21.300Z" fill="#d8d8d8"/><path d="M4.600 8 2.800 6.100M3.900 12.700H1.100M4.800 17.500 3 19.100M18.100 8 19.900 6.100M18.800 12.700H21.600M17.900 17.500 19.700 19.100" stroke="#d8d8d8" stroke-width="1.300"/></g></svg>
<svg style="left:336px;top:826px" width="26" height="24" viewBox="0 0 26 24"><path d="M2.200 21.600 15.800 9.200" stroke="#d98530" stroke-width="3.300"/><path d="M11.100 2.300 17.300 1.900 24.200 9.400 21.500 13.600 16.500 7.800Z" fill="#a6a8aa"/></svg>

<!-- info bars -->
<div class="ib" style="top:779px;height:34px;border-top:1px solid #d9d9c0">
 <div class="tx" style="right:265.500px;top:2px;width:1200px">Would you like to take a quick UI tour? This tour highlights important user interface elements and shows how they are used. To take the tour later, select</div>
 <div class="btn" style="left:690px;top:5.400px;width:88px">Take UI Tour</div>
 <div class="btn" style="left:784px;top:5.400px;width:132px">Do Not Show Again</div>
 <svg style="left:928px;top:11px" width="11" height="11" viewBox="0 0 11 11"><path d="M1 1 10 10M10 1 1 10" stroke="#1a1a1a" stroke-width="1.300"/></svg>
</div>
<div class="ib" style="top:813px;height:28px;border-top:1px solid #d9d9c0">
 <div class="tx" style="right:346px;top:6px;width:1200px">Link with a Qt installation to automatically register Qt versions and kits? To do this later, select Options &gt; Kits &gt; Qt Versions &gt; Link with Qt.</div>
 <div class="btn" style="left:690px;top:3px;width:88px;height:21px;line-height:19px">Link with Qt</div>
 <div class="btn" style="left:784px;top:3px;width:132px;height:21px;line-height:19px">Do Not Show Again</div>
 <svg style="left:928px;top:9px" width="11" height="11" viewBox="0 0 11 11"><path d="M1 1 10 10M10 1 1 10" stroke="#1a1a1a" stroke-width="1.300"/></svg>
</div>

<!-- kit selector popup -->
<div class="dk" style="left:385px;top:582px;width:240px;height:10px"></div>
<div class="dk" style="left:385px;top:589px;width:251px;height:253px"></div>
<div class="kl" style="top:594px">Project: <b>untitled_app</b></div>
<div class="kl" style="top:608px">Kit: <b>Desktop</b></div>
<div class="kl" style="top:622px">Deploy: <b>Deploy Configuration</b></div>
<div class="kl" style="top:636px">Run: <b>untitled_app</b></div>
<div class="kl" style="top:660px;left:391px;font-weight:bold;color:#fff">Build</div>
<div style="left:385px;top:680px;width:251px;height:153px;background:#4d4f51"></div>
<div class="li" style="top:680px">Debug</div>
<div class="li" style="top:710px">Profile</div>
<div class="li" style="top:740px;background:#308cc6;color:#fff">Release</div>

<!-- status bar -->
<div class="dk" style="left:385px;top:841px;width:1189px;height:26px"></div>
<div style="left:387px;top:844px;width:23px;height:21px;background:#262728"></div>
<svg style="left:393px;top:849px" width="12" height="12" viewBox="0 0 12 12"><rect x=".6" y=".6" width="10.800" height="10.800" fill="none" stroke="#e0e0e0" stroke-width="1.200"/><rect x="1" y="1" width="4.500" height="10" fill="#e0e0e0"/></svg>
<div style="left:417px;top:844px;width:200px;height:21px;background:#fff"></div>
<svg style="left:423px;top:848px" width="16" height="14" viewBox="0 0 16 14"><circle cx="9" cy="5.500" r="4" fill="none" stroke="#555" stroke-width="1.300"/><path d="M6.200 8.500 1.800 12.800" stroke="#555" stroke-width="1.600"/><path d="M11.500 11.500h4.400l-2.200 2.400Z" fill="#555"/></svg>
<span class="sb" style="left:444px;color:#a0a0a0">Type to locate (Ctrl+K)</span>
<span class="sb" style="left:629px">1  Issues</span>
<span class="sb" style="left:698px">2  Search Results</span>
<span class="sb" style="left:818px">3  Application Output</span>
<span class="sb" style="left:962px">4  Compile Output</span>
<span class="sb" style="left:1088px">5  QML Debugger Console</span>
<span class="sb" style="left:1260px">8  Test Results</span>
<svg style="left:1364.500px;top:849px" width="8" height="12" viewBox="0 0 8 12"><path d="M.2 5 4 .8 7.800 5ZM.2 7 4 11.200 7.800 7Z" fill="#cfcfcf"/></svg>
<div style="left:1496px;top:844px;width:24px;height:21px;background:#262728"></div>
<svg style="left:1500px;top:847px" width="16" height="14" viewBox="0 0 16 14"><rect x="1.200" y="7.200" width="13.600" height="3.600" rx="1" fill="none" stroke="#e0e0e0" stroke-width="1.200"/><rect x="1.800" y="7.800" width="8.500" height="2.400" fill="#909294"/><path d="M10.700 3.500 12.700 1 14.700 3.500Z" fill="#e0e0e0"/></svg>
<svg style="left:1532px;top:848px" width="13" height="13" viewBox="0 0 13 13"><rect x=".6" y=".6" width="11" height="11" fill="none" stroke="#e0e0e0" stroke-width="1.200"/><rect x="6.500" y="1" width="5" height="10.500" fill="#e0e0e0"/></svg>
<svg style="left:1560px;top:853px" width="14" height="14" viewBox="0 0 14 14"><path d="M13.500 2 2 13.500M13.500 6 6 13.500M13.500 10 10 13.500" stroke="#5a5c5e" stroke-width="1"/></svg>

<!--MORE2-->
</div></div>
</div>
</body>
</html>
